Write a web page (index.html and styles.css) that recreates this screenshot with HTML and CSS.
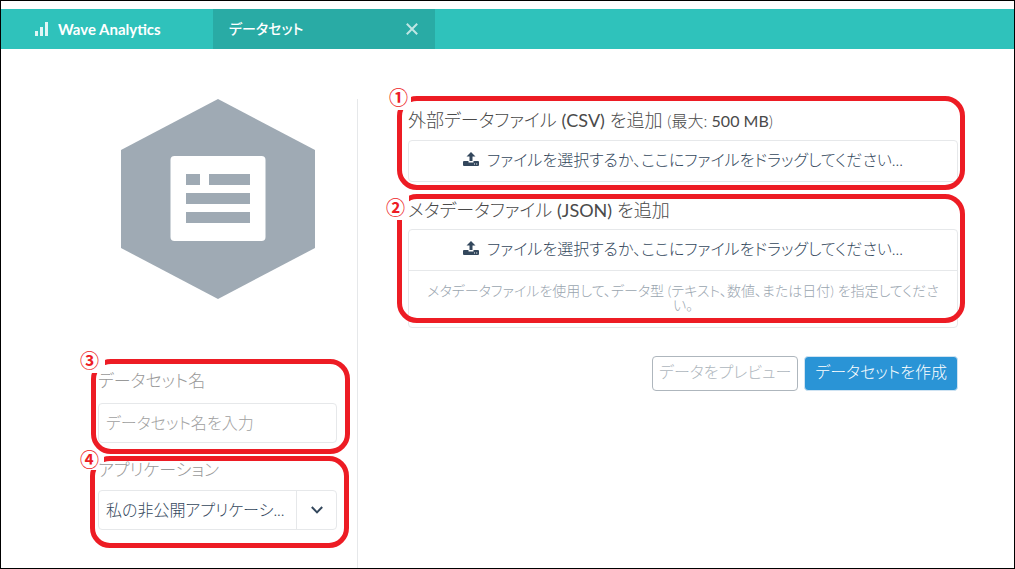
FILE: index.html
```html
<!DOCTYPE html>
<html lang="ja">
<head>
<meta charset="utf-8">
<meta name="viewport" content="width=device-width, initial-scale=1">
<title>Wave Analytics</title>
<link rel="stylesheet" href="styles.css">
</head>
<body>
<header class="topbar">
  <a class="brand" href="#">
    <svg class="brand-icon" viewBox="0 0 13 14" aria-hidden="true"><path d="M0 9h3v5H0zM5 5h3v9H5zM10 0h3v14h-3z"/></svg>
    Wave Analytics
  </a>
  <nav class="tab">
    <a class="tab-link" href="#">データセット</a>
    <button class="tab-close" type="button" aria-label="閉じる">
      <svg viewBox="0 0 12 12" aria-hidden="true"><path d="M.8.8l10.4 10.4M11.2.8L.8 11.2"/></svg>
    </button>
  </nav>
</header>

<form class="page">
  <section class="sidebar">
    <svg class="hexagon" viewBox="0 0 194 200" aria-hidden="true">
      <path fill="#9faab4" d="M97 0l97 51v98l-97 51L0 149V51z"/>
      <rect x="49.500" y="57" width="95" height="85" rx="4" fill="#fff"/>
      <path fill="#9faab4" d="M65 75h14v11H65zM88 75h41v11H88zM65 94h64v11H65zM65 113h64v11H65z"/>
    </svg>
    <div class="field">
      <label class="field-label" for="name">データセット名</label>
      <input class="text-input" id="name" type="text" placeholder="データセット名を入力">
      <div class="marker marker-name"><span class="marker-frame"></span><span class="marker-number">③</span></div>
    </div>
    <div class="field">
      <label class="field-label" for="app">アプリケーション</label>
      <div class="select-box">
        <select class="select" id="app"><option>私の非公開アプリケーシ...</option></select>
        <span class="select-arrow"><svg viewBox="0 0 12 8" aria-hidden="true"><path d="M.8 1L6 6.400 11.200 1"/></svg></span>
      </div>
      <div class="marker marker-app"><span class="marker-frame"></span><span class="marker-number">④</span></div>
    </div>
  </section>

  <section class="content">
    <div class="upload">
      <h2 class="upload-title">外部データファイル <span class="latin">(CSV)</span> を追加 <small>(最大: <span class="latin">500 MB</span>)</small></h2>
      <div class="upload-box">
        <label class="drop">
          <input class="file-input" type="file" accept=".csv">
          <svg class="upload-icon" viewBox="0 0 16 14" aria-hidden="true"><path d="M8 0l4.500 4.500H9.500V9h-3V4.500h-3zM1 9h4.500v1.500h5V9H15q1 0 1 1v3q0 1-1 1H1q-1 0-1-1v-3q0-1 1-1z"/><path fill="#fff" d="M11 11.500h1v1h-1zM13.200 11.500h1v1h-1z"/></svg>
          ファイルを選択するか、ここにファイルをドラッグしてください...
        </label>
      </div>
      <div class="marker marker-csv"><span class="marker-frame"></span><span class="marker-number">①</span></div>
    </div>
    <div class="upload">
      <h2 class="upload-title">メタデータファイル <span class="latin">(JSON)</span> を追加</h2>
      <div class="upload-box">
        <label class="drop">
          <input class="file-input" type="file" accept=".json">
          <svg class="upload-icon" viewBox="0 0 16 14" aria-hidden="true"><path d="M8 0l4.500 4.500H9.500V9h-3V4.500h-3zM1 9h4.500v1.500h5V9H15q1 0 1 1v3q0 1-1 1H1q-1 0-1-1v-3q0-1 1-1z"/><path fill="#fff" d="M11 11.500h1v1h-1zM13.200 11.500h1v1h-1z"/></svg>
          ファイルを選択するか、ここにファイルをドラッグしてください...
        </label>
        <p class="hint">メタデータファイルを使用して、データ型 (テキスト、数値、または日付) を指定してください。</p>
      </div>
      <div class="marker marker-json"><span class="marker-frame"></span><span class="marker-number">②</span></div>
    </div>
    <div class="actions">
      <button class="button" type="button" disabled>データをプレビュー</button>
      <button class="button button-primary" type="submit">データセットを作成</button>
    </div>
  </section>
</form>
</body>
</html>
```
FILE: styles.css
```css
* {
  box-sizing: border-box;
}

body {
  display: flex;
  flex-direction: column;
  min-height: 100vh;
  margin: 0;
  border: 1px solid #000;
  background: #fff;
  color: #4a4a4a;
  font-family: Lato, "Noto Sans CJK JP", sans-serif;
  font-size: 16px;
  font-weight: 300;
  font-feature-settings: "palt";
}

input,
select,
button {
  font: inherit;
  font-feature-settings: inherit;
}

/* Top bar */
.topbar {
  display: flex;
  height: 40px;
  margin-top: 8px;
  background: #2fc2bb;
}

.brand {
  display: flex;
  align-items: center;
  gap: 10px;
  width: 212px;
  padding-left: 34px;
  color: #fff;
  font-size: 15px;
  font-weight: 700;
  text-decoration: none;
}

.brand-icon {
  width: 13px;
  height: 14px;
  fill: #e0f6f5;
}

.tab {
  display: flex;
  align-items: center;
  justify-content: space-between;
  width: 222px;
  padding: 0 16px;
  background: #29aba5;
}

.tab-link {
  padding-bottom: 2px;
  color: #fff;
  font-size: 14px;
  font-weight: 500;
  text-decoration: none;
}

.tab-close {
  display: flex;
  padding: 0;
  border: 0;
  background: none;
}

.tab-close svg {
  width: 14px;
  height: 12px;
  fill: none;
  stroke: #bfe6e4;
  stroke-width: 2;
}

/* Page columns */
.page {
  display: grid;
  flex: 1;
  grid-template-columns: 357px 1fr;
  padding-top: 50px;
}

.sidebar {
  display: flex;
  flex-direction: column;
  gap: 15px;
  padding: 0 20px 38px 97px;
  border-right: 1px solid #e6e8ea;
}

.hexagon {
  width: 194px;
  height: 200px;
  margin: 0 auto 55px;
}

.content {
  display: flex;
  flex-direction: column;
  gap: 16px;
  padding: 9px 56px 0 50px;
}

/* Fields */
.field,
.upload {
  position: relative;
}

.field-label {
  display: block;
  margin-bottom: 10px;
  color: #999;
  font-size: 17px;
  line-height: 24px;
}

.field + .field .field-label {
  margin-bottom: 8px;
}

.text-input,
.select-box {
  width: 100%;
  height: 40px;
  border: 1px solid #e6e8ea;
  border-radius: 4px;
  background: #fff;
}

.text-input {
  display: block;
  padding: 0 7px 2px;
}

.text-input::placeholder {
  color: #a0a0a0;
}

.select-box {
  display: grid;
  grid-template-columns: 1fr 40px;
}

.select {
  grid-area: 1 / 1 / 2 / 3;
  padding: 0 48px 2px 7px;
  border: 0;
  background: none;
  color: #33475c;
  appearance: none;
}

.select-arrow {
  display: flex;
  grid-area: 1 / 2;
  align-items: center;
  justify-content: center;
  border-left: 1px solid #e6e8ea;
  pointer-events: none;
}

.select-arrow svg {
  width: 12px;
  height: 8px;
  fill: none;
  stroke: #33475c;
  stroke-width: 2;
}

/* Uploads */
.upload-title {
  margin: 0 0 7px;
  font-size: 18px;
  font-weight: 300;
  line-height: 24px;
}

.upload-title small {
  font-size: 16px;
}

.latin {
  font-weight: 400;
}

.upload-box {
  border: 1px solid #e6e8ea;
  border-radius: 4px;
}

.drop {
  display: flex;
  align-items: center;
  justify-content: center;
  gap: 8px;
  height: 40px;
  padding-bottom: 4px;
  color: #33475c;
}

.file-input {
  position: absolute;
  opacity: 0;
  width: 1px;
  height: 1px;
}

.upload-icon {
  width: 16px;
  height: 14px;
  fill: #33475c;
}

.hint {
  margin: 0;
  padding: 13px 16px 15px;
  border-top: 1px solid #e6e8ea;
  color: #9aa5af;
  font-size: 14px;
  line-height: 14px;
  text-align: center;
}

/* Buttons */
.actions {
  display: flex;
  justify-content: flex-end;
  gap: 6px;
  margin-top: 12px;
}

.button {
  height: 35px;
  padding: 0 6px 5px;
  border: 1px solid #aeb6bd;
  border-radius: 4px;
  background: #fff;
  color: #aeb6bd;
}

.button-primary {
  padding: 0 10px 5px;
  border-color: #cfe3f2;
  background: #2a94d6;
  color: #fff;
}

/* Numbered callouts drawn over the form */
.marker {
  position: absolute;
  color: #ed1c24;
  pointer-events: none;
}

.marker-frame {
  position: absolute;
  inset: 0;
  border: 5px solid;
  border-radius: 20px;
  clip-path: polygon(14px 0, 100% 0, 100% 100%, 0 100%, 0 14px, 14px 14px);
}

.marker-number {
  position: absolute;
  top: -8px;
  left: -11px;
  font-family: "Noto Sans CJK JP", sans-serif;
  font-size: 19px;
  font-weight: 700;
  line-height: 18px;
}

.marker-csv {
  inset: -12px -7px -8px -11px;
}

.marker-csv .marker-number {
  left: -8px;
}

.marker-json {
  inset: -4px -7px 5px -11px;
}

.marker-json .marker-frame {
  clip-path: polygon(12px 0, 100% 0, 100% 100%, 0 100%, 0 26px, 12px 26px);
}

.marker-json .marker-number {
  top: 4px;
}

.marker-name {
  inset: -10px -13px -11px -7px;
}

.marker-app {
  inset: -2px -12px -18px -8px;
}

.marker-app .marker-number {
  top: -6px;
  left: -10px;
}
```
